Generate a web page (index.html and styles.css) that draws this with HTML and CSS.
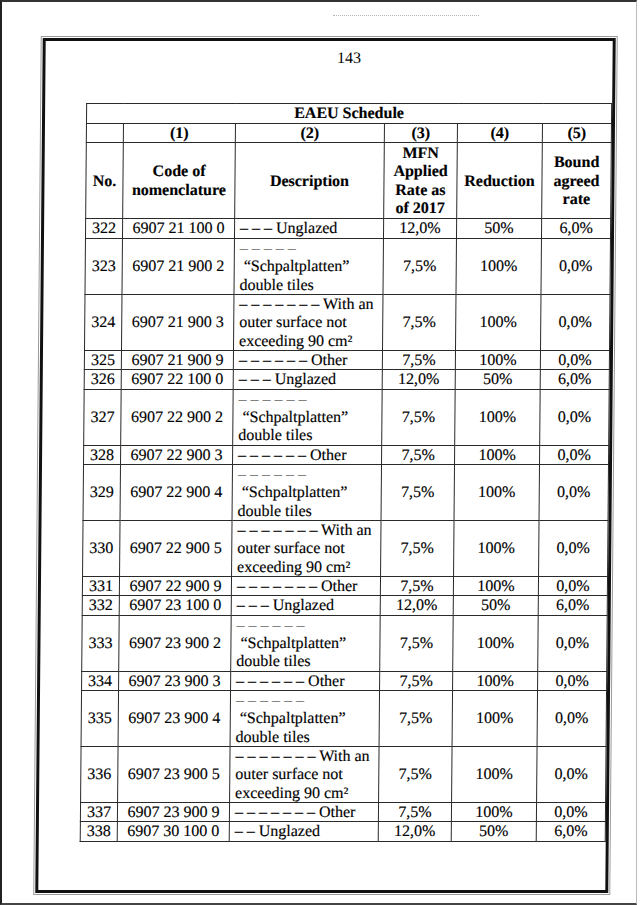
FILE: index.html
```html
<!DOCTYPE html>
<html lang="en">
<head>
<meta charset="utf-8">
<title>EAEU Schedule – 143</title>
<link rel="stylesheet" href="styles.css">
</head>
<body>
<div class="sheet">
  <div class="specks"><span class="speck-line"></span></div>
  <div class="frame">
    <div class="pageno">143</div>
    <table class="schedule">
      <colgroup>
        <col class="c-no"><col class="c-code"><col class="c-desc"><col class="c-mfn"><col class="c-red"><col class="c-bound">
      </colgroup>
      <thead>
        <tr class="h-title"><th colspan="6">EAEU Schedule</th></tr>
        <tr class="h-num"><th></th><th>(1)</th><th>(2)</th><th>(3)</th><th>(4)</th><th>(5)</th></tr>
        <tr class="h-main">
          <th>No.</th>
          <th>Code of<br>nomenclature</th>
          <th>Description</th>
          <th>MFN<br>Applied<br>Rate as<br>of 2017</th>
          <th>Reduction</th>
          <th>Bound<br>agreed<br>rate</th>
        </tr>
      </thead>
      <tbody>
        <tr><td>322</td><td>6907 21 100 0</td><td class="desc">– – – Unglazed</td><td>12,0%</td><td>50%</td><td>6,0%</td></tr>
        <tr><td>323</td><td>6907 21 900 2</td><td class="desc"><span class="dash">– – – – –</span><br><span class="quote">“Schpaltplatten”</span><br>double tiles</td><td>7,5%</td><td>100%</td><td>0,0%</td></tr>
        <tr><td>324</td><td>6907 21 900 3</td><td class="desc">– – – – – – – With an<br>outer surface not<br>exceeding 90 cm²</td><td>7,5%</td><td>100%</td><td>0,0%</td></tr>
        <tr><td>325</td><td>6907 21 900 9</td><td class="desc">– – – – – – Other</td><td>7,5%</td><td>100%</td><td>0,0%</td></tr>
        <tr><td>326</td><td>6907 22 100 0</td><td class="desc">– – – Unglazed</td><td>12,0%</td><td>50%</td><td>6,0%</td></tr>
        <tr><td>327</td><td>6907 22 900 2</td><td class="desc"><span class="dash">– – – – – –</span><br><span class="quote">“Schpaltplatten”</span><br>double tiles</td><td>7,5%</td><td>100%</td><td>0,0%</td></tr>
        <tr><td>328</td><td>6907 22 900 3</td><td class="desc">– – – – – – Other</td><td>7,5%</td><td>100%</td><td>0,0%</td></tr>
        <tr><td>329</td><td>6907 22 900 4</td><td class="desc"><span class="dash">– – – – – –</span><br><span class="quote">“Schpaltplatten”</span><br>double tiles</td><td>7,5%</td><td>100%</td><td>0,0%</td></tr>
        <tr><td>330</td><td>6907 22 900 5</td><td class="desc">– – – – – – – With an<br>outer surface not<br>exceeding 90 cm²</td><td>7,5%</td><td>100%</td><td>0,0%</td></tr>
        <tr><td>331</td><td>6907 22 900 9</td><td class="desc">– – – – – – – Other</td><td>7,5%</td><td>100%</td><td>0,0%</td></tr>
        <tr><td>332</td><td>6907 23 100 0</td><td class="desc">– – – Unglazed</td><td>12,0%</td><td>50%</td><td>6,0%</td></tr>
        <tr><td>333</td><td>6907 23 900 2</td><td class="desc"><span class="dash">– – – – – –</span><br><span class="quote">“Schpaltplatten”</span><br>double tiles</td><td>7,5%</td><td>100%</td><td>0,0%</td></tr>
        <tr><td>334</td><td>6907 23 900 3</td><td class="desc">– – – – – – Other</td><td>7,5%</td><td>100%</td><td>0,0%</td></tr>
        <tr><td>335</td><td>6907 23 900 4</td><td class="desc"><span class="dash">– – – – – –</span><br><span class="quote">“Schpaltplatten”</span><br>double tiles</td><td>7,5%</td><td>100%</td><td>0,0%</td></tr>
        <tr><td>336</td><td>6907 23 900 5</td><td class="desc">– – – – – – – With an<br>outer surface not<br>exceeding 90 cm²</td><td>7,5%</td><td>100%</td><td>0,0%</td></tr>
        <tr><td>337</td><td>6907 23 900 9</td><td class="desc">– – – – – – – Other</td><td>7,5%</td><td>100%</td><td>0,0%</td></tr>
        <tr><td>338</td><td>6907 30 100 0</td><td class="desc">– – Unglazed</td><td>12,0%</td><td>50%</td><td>6,0%</td></tr>
      </tbody>
    </table>
  </div>
</div>
</body>
</html>
```
FILE: styles.css
```css
html, body {
  margin: 0;
  padding: 0;
  background: #fff;
}

body {
  font-family: "Liberation Serif", "Times New Roman", serif;
  color: #000;
}

.sheet {
  box-sizing: border-box;
  width: 637px;
  height: 905px;
  border-top: 2px solid #333;
  border-left: 2px solid #222;
  border-right: 1px solid #bbb;
  border-bottom: 2px solid #444;
  overflow: hidden;
}

.specks {
  box-sizing: border-box;
  height: 36px;
  padding: 13px 0 0 331px;
}

.speck-line {
  display: block;
  width: 146px;
  border-top: 1px dotted #b5b5b5;
}

.frame {
  box-sizing: border-box;
  margin-left: 37px;
  width: 573px;
  height: 855px;
  border: 3px solid #111;
  outline: 1px solid #9a9a9a;
  outline-offset: 1px;
  padding: 8px 0 0 41px;
  transform: skewX(-0.5deg);
}

.pageno {
  width: 525px;
  text-align: center;
  font-size: 16px;
  line-height: 18.4px;
}

.schedule {
  margin-top: 36px;
  width: 525px;
  table-layout: fixed;
  border-collapse: collapse;
  font-size: 16px;
  line-height: 18.35px;
  -webkit-text-stroke: 0.15px #000;
}

.c-no { width: 37px; }
.c-code { width: 112px; }
.c-desc { width: 149px; }
.c-mfn { width: 73px; }
.c-red { width: 85px; }
.c-bound { width: 69px; }

.schedule th,
.schedule td {
  border: 1px solid #2a2a2a;
  padding: 0 2px;
  text-align: center;
  vertical-align: middle;
  white-space: nowrap;
  font-weight: normal;
}

.schedule th {
  font-weight: bold;
}

.h-main th {
  padding-top: 1px;
  padding-bottom: 1px;
}

.schedule td.desc {
  text-align: left;
  padding-left: 5px;
}

.dash {
  color: #666;
  -webkit-text-stroke: 0;
}

.quote {
  padding-left: 4px;
}
```
